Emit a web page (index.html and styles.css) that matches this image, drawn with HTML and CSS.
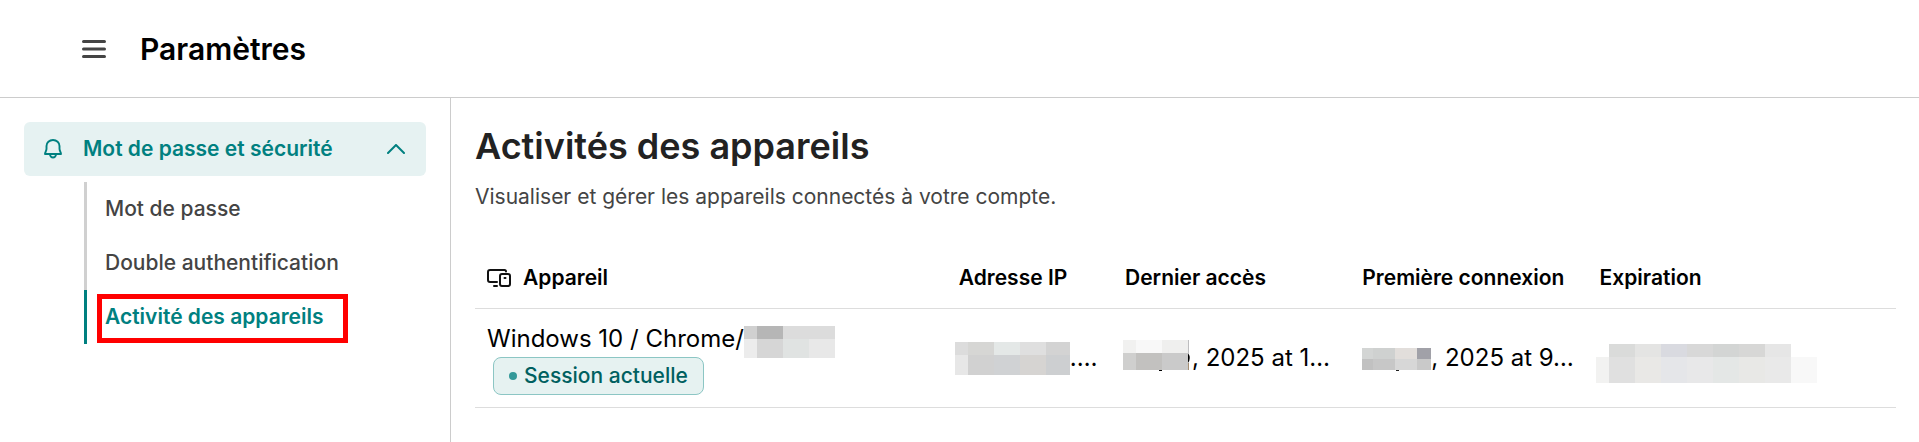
FILE: index.html
```html
<!DOCTYPE html>
<html lang="fr">
<head>
<meta charset="utf-8">
<title>Paramètres</title>
<link rel="stylesheet" href="styles.css">
</head>
<body>
<header class="topbar">
  <button class="menu-button" type="button" aria-label="Menu">
    <svg width="24" height="18" viewBox="0 0 24 18"><path d="M1.5 1.5h21M1.5 9h21M1.5 16.5h21" fill="none" stroke="#444" stroke-width="3" stroke-linecap="round"/></svg>
  </button>
  <h1 class="topbar-title">Paramètres</h1>
</header>
<div class="layout">
  <nav class="sidebar">
    <button class="group" type="button" aria-expanded="true">
      <svg width="18" height="20" viewBox="0 0 18 20" fill="none" stroke="#008080" stroke-width="1.9" stroke-linecap="round" stroke-linejoin="round"><path d="M9 1C5.300 1 2.500 3.700 2.500 7v2.800C2.500 11.800 1 13.200 1 15h16c0-1.800-1.500-3.200-1.500-5.200V7c0-3.300-2.800-6-6.500-6z"/><path d="M6 15.200a3 3.300 0 0 0 6 0"/></svg>
      <span class="group-label">Mot de passe et sécurité</span>
      <svg width="18" height="10" viewBox="0 0 18 10"><path d="M1 9l8-8 8 8" fill="none" stroke="#008080" stroke-width="2" stroke-linecap="round" stroke-linejoin="round"/></svg>
    </button>
    <ul class="subnav">
      <li><a class="sublink" href="#password">Mot de passe</a></li>
      <li><a class="sublink" href="#two-factor">Double authentification</a></li>
      <li><a class="sublink active" href="#devices" aria-current="page">Activité des appareils</a></li>
    </ul>
  </nav>
  <main class="content">
    <h2 class="title">Activités des appareils</h2>
    <p class="subtitle">Visualiser et gérer les appareils connectés à votre compte.</p>
    <table class="devices">
      <colgroup><col class="col-device"><col class="col-ip"><col class="col-date"><col class="col-date"><col></colgroup>
      <thead>
        <tr>
          <th scope="col"><span class="device-head"><svg width="24" height="18" viewBox="0 0 24 18" fill="none" stroke="#111" stroke-width="2" stroke-linecap="round" stroke-linejoin="round"><path d="M19 2.500C19 1.500 18.500 1 17.500 1H3C1.700 1 1 1.700 1 3v8c0 1.300.700 2 2 2h7M7 17h3"/><rect x="13" y="5" width="10" height="12" rx="2"/><path d="M17.500 9h1"/></svg>Appareil</span></th>
          <th scope="col">Adresse IP</th>
          <th scope="col">Dernier accès</th>
          <th scope="col">Première connexion</th>
          <th scope="col">Expiration</th>
        </tr>
      </thead>
      <tbody>
        <tr>
          <td>
            <div class="value">Windows 10 / Chrome/<svg width="91" height="38" viewBox="0 -6 91 38" shape-rendering="crispEdges"><path fill="#d0d0d0" d="M0 0h13v13H0z"/><path fill="#b6b6b6" d="M13 0h26v13H13z"/><path fill="#dcdcdc" d="M39 0h52v13H39z"/><path fill="#ececec" d="M0 13h13v19H0z"/><path fill="#d6d6d6" d="M13 13h26v19H13z"/><path fill="#e0e3e2" d="M39 13h26v19H39z"/><path fill="#e8e8e8" d="M65 13h26v19H65z"/></svg></div>
            <span class="badge">Session actuelle</span>
          </td>
          <td>
            <div class="value shifted"><svg width="115" height="33" viewBox="0 0 115 33" shape-rendering="crispEdges"><path fill="#dcdcdc" d="M0 0h13v13H0z"/><path fill="#d6d6d4" d="M13 0h26v13H13z"/><path fill="#e4e8e7" d="M39 0h26v13H39z"/><path fill="#dfdfdf" d="M65 0h26v13H65z"/><path fill="#d3d3d3" d="M91 0h24v13H91z"/><path fill="#e7e7e7" d="M0 13h13v20H0z"/><path fill="#d1d1d1" d="M13 13h26v20H13z"/><path fill="#d0d2d4" d="M39 13h26v20H39z"/><path fill="#d6d4d2" d="M65 13h26v20H65z"/><path fill="#cdcfd1" d="M91 13h24v20H91z"/></svg>.…</div>
          </td>
          <td>
            <div class="value nudged"><svg width="69" height="36" viewBox="0 0 69 36"><path fill="#000" d="M36 30h3v1h-3zM65 13q3.500 5 0 10z"/><g shape-rendering="crispEdges"><path fill="#f1f1f0" d="M0 0h13v13H0z"/><path fill="#f8f8f8" d="M13 0h26v13H13z"/><path fill="#efefee" d="M39 0h26v13H39z"/><path fill="#cfcfce" d="M0 13h13v17H0z"/><path fill="#c2c1bf" d="M13 13h26v17H13z"/><path fill="#cacaca" d="M39 13h26v17H39z"/><path fill="#bdbdbf" d="M65 0h1v13h-1z"/><path fill="#a58f74" d="M65 23h1v7h-1z"/></g></svg>, 2025 at 1…</div>
          </td>
          <td>
            <div class="value"><svg width="69" height="26" viewBox="0 -3 69 26" shape-rendering="crispEdges"><path fill="#d3d5d4" d="M0 0h11v11H0z"/><path fill="#cfd1d0" d="M11 0h22v11H11z"/><path fill="#e2dedb" d="M33 0h22v11H33z"/><path fill="#a1a1a8" d="M55 0h14v11H55z"/><path fill="#c1c1c1" d="M0 11h11v11H0z"/><path fill="#c7c7c7" d="M11 11h22v11H11z"/><path fill="#d7d7d7" d="M33 11h22v11H33z"/><path fill="#c9c9c9" d="M55 11h14v11H55z"/><path fill="#222" d="M34 22h3v1h-3z"/></svg>, 2025 at 9…</div>
          </td>
          <td>
            <div class="value shifted"><svg width="221" height="49" viewBox="0 -10 221 49" shape-rendering="crispEdges"><path fill="#dadbda" d="M13 0h26v13H13z"/><path fill="#e4e4e3" d="M39 0h26v13H39z"/><path fill="#d9dae0" d="M65 0h26v13H65z"/><path fill="#d8d8d8" d="M91 0h26v13H91z"/><path fill="#d3d5d4" d="M117 0h26v13h-26z"/><path fill="#d7d7d6" d="M143 0h26v13h-26z"/><path fill="#e6e6e6" d="M169 0h26v13h-26z"/><path fill="#f2f2f1" d="M0 13h13v26H0z"/><path fill="#e0e0e0" d="M13 13h26v26H13z"/><path fill="#e9e8e6" d="M39 13h26v26H39z"/><path fill="#e5e6e9" d="M65 13h26v26H65z"/><path fill="#e8e8e9" d="M91 13h26v26H91z"/><path fill="#e4e7e6" d="M117 13h26v26h-26z"/><path fill="#e8e8e6" d="M143 13h26v26h-26z"/><path fill="#e9e9e9" d="M169 13h26v26h-26z"/><path fill="#f8f8f8" d="M195 13h26v26h-26z"/></svg></div>
          </td>
        </tr>
      </tbody>
    </table>
  </main>
</div>
</body>
</html>
```
FILE: styles.css
```css
* { box-sizing: border-box; }

body {
  margin: 0;
  min-height: 100vh;
  display: flex;
  flex-direction: column;
  background: #fff;
  color: #000;
  font-family: Inter, "Liberation Sans", sans-serif;
  font-size: 21px;
  line-height: 30px;
}

button {
  border: 0;
  background: none;
  font: inherit;
  color: inherit;
  cursor: pointer;
}

svg { display: block; flex: none; }

.topbar {
  display: flex;
  align-items: center;
  gap: 34px;
  height: 98px;
  padding: 0 82px;
  border-bottom: 1px solid #ccc;
}

.menu-button { padding: 0; }

.topbar-title {
  margin: 0;
  font-size: 30px;
  font-weight: 600;
}

.layout { display: flex; flex: 1; }

.sidebar {
  flex: none;
  width: 451px;
  padding: 24px;
  border-right: 1px solid #ccc;
}

.group {
  display: flex;
  align-items: center;
  width: 100%;
  padding: 12px 21px 12px 20px;
  border-radius: 6px;
  background: #e6f2f2;
  color: #008080;
  font-weight: 600;
  text-align: left;
}

.group-label { flex: 1; margin-left: 21px; }

.subnav {
  list-style: none;
  margin: 6px 0 0 60px;
  padding: 0;
}

.sublink {
  position: relative;
  display: block;
  width: max-content;
  padding: 12px 18px;
  border-left: 3px solid #d0d0d0;
  color: #444;
  font-weight: 500;
  text-decoration: none;
}

.sublink.active {
  border-left-color: #008080;
  color: #008080;
  font-weight: 600;
}

.sublink.active::after {
  content: "";
  position: absolute;
  inset: 4px -6px 1px 10px;
  border: 5px solid #f00;
}

.content {
  flex: 1;
  min-width: 0;
  padding: 26px 23px 24px 24px;
}

.title {
  margin: 0 0 14px;
  color: #222;
  font-size: 36px;
  line-height: 44px;
  font-weight: 600;
}

.subtitle { margin: 0 0 36px; color: #444; }

.devices {
  width: 100%;
  table-layout: fixed;
  border-collapse: separate;
  border-spacing: 0;
}

.col-device { width: 33.2%; }
.col-ip { width: 11.7%; }
.col-date { width: 16.7%; }

.devices th,
.devices td {
  padding: 12px;
  border-bottom: 1px solid #ddd;
  text-align: left;
  vertical-align: middle;
}

.devices th { padding: 15px 12px; font-weight: 600; white-space: nowrap; }

.device-head { display: flex; align-items: center; gap: 12px; }

.value {
  display: flex;
  align-items: center;
  height: 36px;
  font-size: 24px;
  line-height: 36px;
  white-space: pre;
}

.shifted { margin-left: -4px; }
.nudged { margin-left: -2px; }

.badge {
  display: flex;
  align-items: center;
  gap: 7px;
  width: max-content;
  height: 38px;
  margin-left: 6px;
  padding: 0 15px;
  border: 1px solid #8cc6c4;
  border-radius: 8px;
  background: #e6f2f1;
  color: #006060;
  font-weight: 500;
}

.badge::before {
  content: "";
  width: 8px;
  height: 8px;
  border-radius: 50%;
  background: #339999;
}
```
